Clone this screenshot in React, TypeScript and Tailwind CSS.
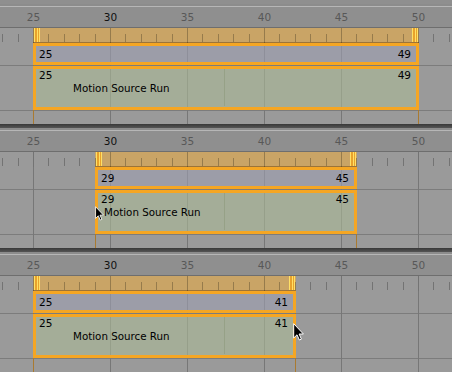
import React from "react";

const X = (f: number) => Math.floor(33.5 + (f - 25) * 15.4);

const MAJORS = [25, 30, 35, 40, 45, 50];
const MINORS: number[] = [];
for (let f = 23; f <= 52; f++) MINORS.push(f);

type PanelProps = {
  start: number;
  end: number;
  textLeft: number;
  first?: boolean;
  cursor?: { x: number; y: number; w: number; h: number };
};

function Cursor({ w, h }: { w: number; h: number }) {
  return (
    <svg width={w} height={h} viewBox="0 0 11 18" className="block">
      <path
        d="M0.7 0.7 L0.7 15 L4 11.8 L6.4 17 L8.4 16.1 L6.1 11 L10.4 11 Z"
        fill="#000"
        stroke="#fff"
        strokeWidth="1"
        strokeLinejoin="miter"
      />
    </svg>
  );
}

function Panel({ start, end, textLeft, first, cursor }: PanelProps) {
  const left = X(start);
  const right = X(end + 1);
  const width = right - left + 1;
  return (
    <div className="relative h-[124px] shrink-0 flex flex-col">
      <div
        className={
          first
            ? "h-[4px] bg-[#8f8f8f]"
            : "h-[4px] bg-gradient-to-b from-[#383838] to-[#555555]"
        }
      />
      <div className="h-[2px] bg-[#8c8c8c]" />
      <div className="h-px bg-[#b6b6b6]" />
      {/* header with frame numbers */}
      <div className="relative h-[20px] bg-[#8f8f8f]">
        {MAJORS.map((f) => (
          <div
            key={f}
            className={
              "absolute top-0 h-full flex items-center -translate-x-1/2 text-[10.5px] leading-[12px] " +
              (f === 30 ? "text-[#111111]" : "text-[#585858]")
            }
            style={{ left: X(f) + 0.5 }}
          >
            {f}
          </div>
        ))}
      </div>
      {/* ruler */}
      <div className="relative h-[16px] border-t border-[#6e6e6e] bg-[#9a9a9a]">
        <div
          className="absolute top-0 bottom-0 bg-[#c9a466] border-b border-[#9c7438]"
          style={{ left, width }}
        />
        {MINORS.map((f) => (
          <div
            key={f}
            className={
              f % 5 === 0
                ? "absolute top-0 bottom-0 w-px bg-black/25"
                : "absolute bottom-[1px] h-[8px] w-px bg-black/25"
            }
            style={{ left: X(f) }}
          />
        ))}
        {/* start marker */}
        <div
          className="absolute top-0 bottom-[1px] w-[6px] bg-[#e8a22c] flex justify-between"
          style={{ left: left + 1 }}
        >
          <div className="w-px bg-[#ffe066]" />
          <div className="w-px bg-[#ffe066]" />
          <div className="w-px bg-[#ffe066]" />
        </div>
        {/* end marker */}
        <div
          className="absolute top-0 bottom-[1px] w-[6px] bg-[#e8a22c] flex justify-between"
          style={{ left: right - 6 }}
        >
          <div className="w-px bg-[#ffe066]" />
          <div className="w-px bg-[#ffe066]" />
          <div className="w-px bg-[#ffe066]" />
        </div>
      </div>
      {/* rows */}
      <div className="relative flex-1 bg-[#9a9a9a]">
        <div className="absolute left-0 right-0 top-[22px] h-px bg-[#7c7c7c]" />
        <div className="absolute left-0 right-0 top-[67px] h-px bg-[#7c7c7c]" />
        {MAJORS.map((f) => (
          <div
            key={f}
            className="absolute top-0 bottom-0 w-px bg-[#777777]"
            style={{ left: X(f) }}
          />
        ))}
        <div className="absolute top-0 bottom-0 w-px bg-[#a97a30]" style={{ left }} />
        <div className="absolute top-0 bottom-0 w-px bg-[#a97a30]" style={{ left: right }} />
        {/* action strip */}
        <div
          className="absolute top-0 h-[22px] border-[3px] border-[#f5a623] bg-[rgba(158,160,178,0.6)] flex items-center justify-between pl-[3px] pr-[5px] text-[10.5px] leading-[12px] text-black"
          style={{ left, width }}
        >
          <span>{start}</span>
          <span>{end}</span>
        </div>
        {/* marker line inside source strip */}
        <div className="absolute top-[26px] h-[37px] w-px bg-[#767c6e]" style={{ left: 224 }} />
        {/* source strip */}
        <div
          className="absolute top-[23px] h-[44px] border-[3px] border-[#f5a623] bg-[rgba(172,186,152,0.6)] flex items-start justify-between pl-[3px] pr-[5px] text-[10.5px] leading-[12px] text-black"
          style={{ left, width }}
        >
          <span>{start}</span>
          <span>{end}</span>
        </div>
        <div
          className="absolute top-[39px] text-[10.3px] leading-[12px] text-black whitespace-nowrap"
          style={{ left: textLeft }}
        >
          Motion Source Run
        </div>
      </div>
      {cursor && (
        <div className="absolute" style={{ left: cursor.x, top: cursor.y }}>
          <Cursor w={cursor.w} h={cursor.h} />
        </div>
      )}
    </div>
  );
}

export default function App() {
  return (
    <div
      className="w-[452px] h-[372px] overflow-hidden bg-[#9a9a9a] flex flex-col"
      style={{ fontFamily: '"DejaVu Sans", "Liberation Sans", sans-serif' }}
    >
      <Panel start={25} end={49} textLeft={73} first />
      <Panel start={29} end={45} textLeft={104} cursor={{ x: 95, y: 82, w: 9, h: 15 }} />
      <Panel start={25} end={41} textLeft={73} cursor={{ x: 293, y: 75, w: 11, h: 18 }} />
    </div>
  );
}
